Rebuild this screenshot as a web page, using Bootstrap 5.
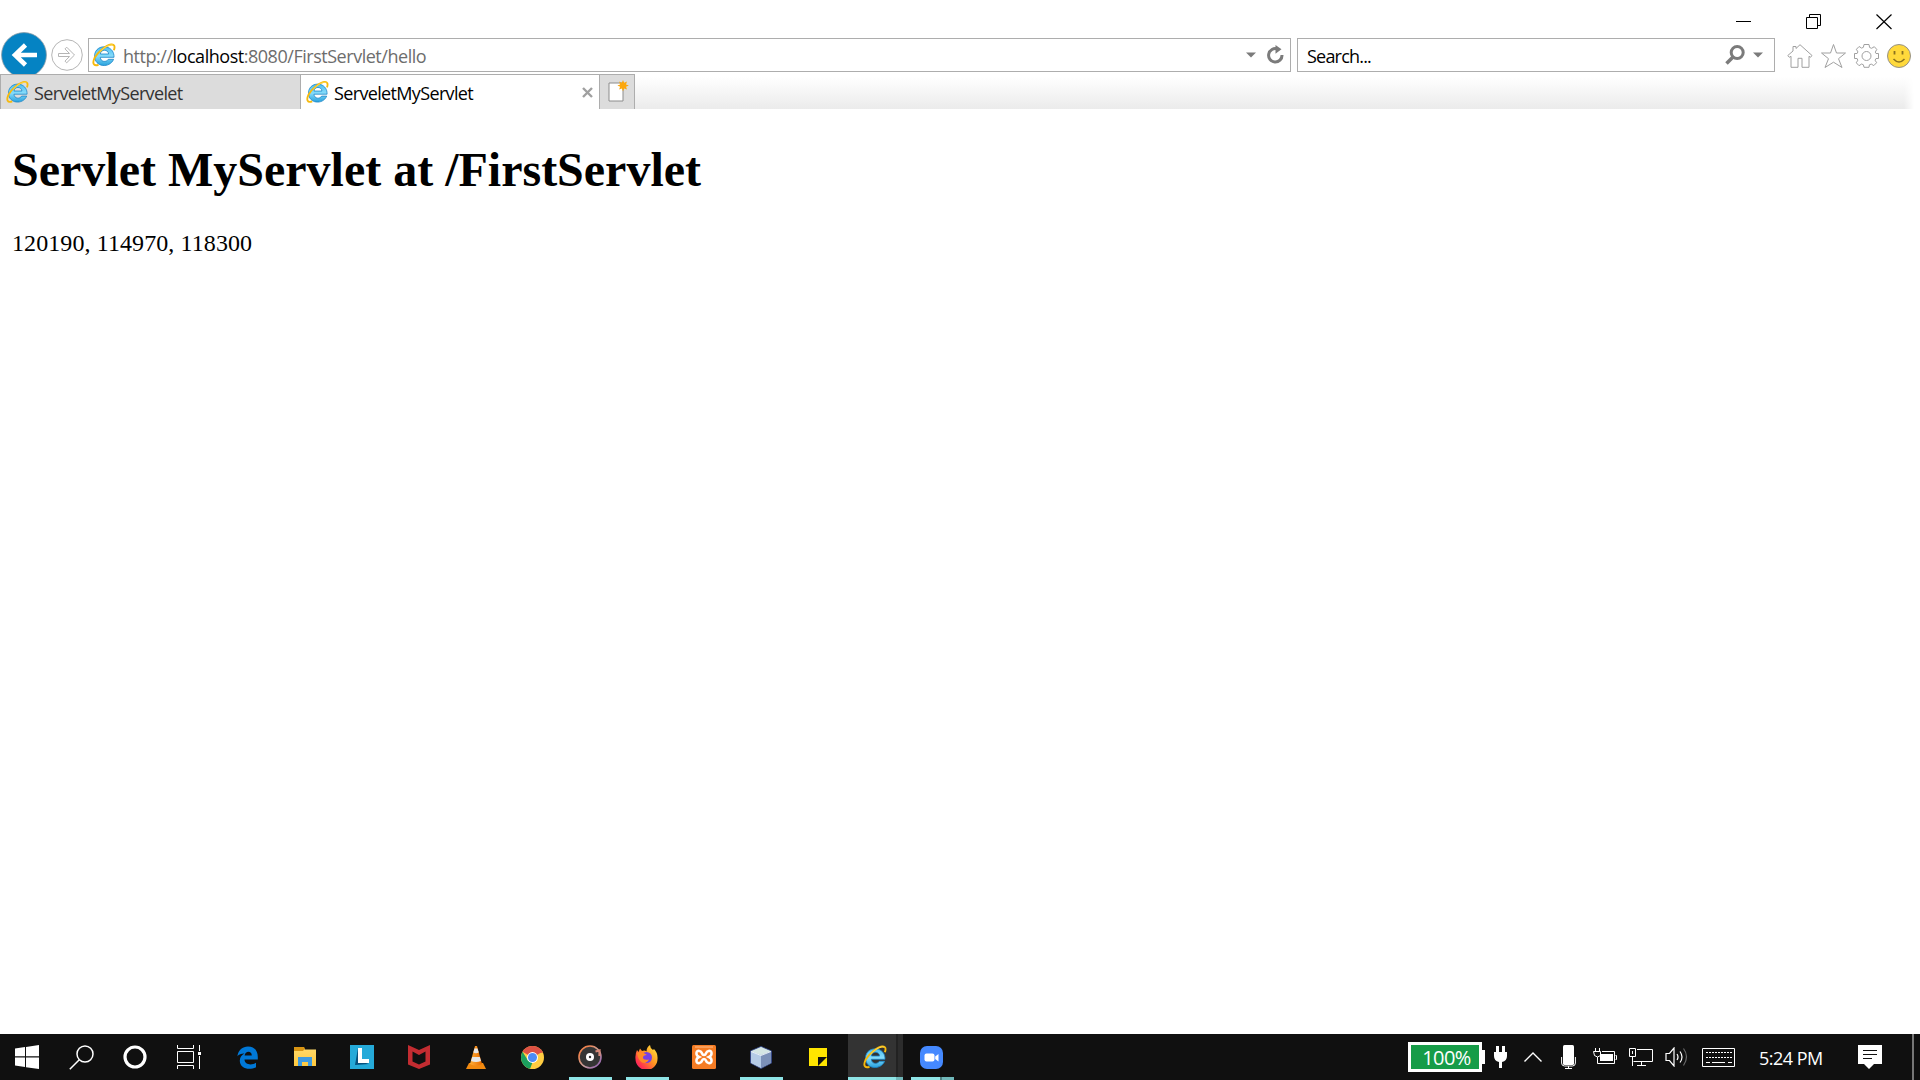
<!DOCTYPE html>
<html lang="en">
<head>
<meta charset="utf-8">
<title>ServeletMyServlet</title>
<link href="https://cdn.jsdelivr.net/npm/bootstrap@5.3.0/dist/css/bootstrap.min.css" rel="stylesheet">
<style>
  html, body { height: 100%; }
  body { overflow: hidden; background: #fff; color: #000; font-family: "Open Sans", "Noto Sans", sans-serif; }
  svg { display: block; flex: none; }
  .ui-text { font-size: 18px; line-height: 24px; white-space: nowrap; }
  header .ui-text { padding-top: 2px; }
  .title-bar { height: 38px; padding: 14px 28px 0 0; gap: 54px; }
  .nav-bar { height: 34px; padding-left: 1px; }
  .field-box { height: 34px; border: 1px solid #adadad; background: #fff; }
  .address-box { width: 1203px; margin-left: 5px; padding: 0 4px 0 3px; }
  .search-box { width: 478px; margin-left: 6px; padding: 0 11px 0 9px; }
  .search-box .ui-text { letter-spacing: -.8px; }
  .url { color: #6d6d6d; letter-spacing: -.47px; margin-left: 7px; }
  .url span { color: #000; }
  .tool-icons { margin-left: 12px; gap: 8px; padding-top: 1px; }
  .tab-strip { height: 37px; padding-top: 2px; }
  .tab-fill { background: linear-gradient(#fff 8%, #ebebeb); -webkit-mask-image: linear-gradient(90deg, #000 calc(100% - 16px), transparent calc(100% - 6px)); }
  .tab-item { width: 300px; border: 1px solid #adadad; border-bottom: 0; padding: 0 6px 0 5px; background: #fff; z-index: 1; }
  .tab-item.idle { background: #dcdcdc; color: #333; border-right: 0; }
  .tab-item .ui-text { margin-left: 5px; letter-spacing: -.65px; }
  .tab-new { width: 35px; border: 1px solid #adadad; border-left: 0; border-bottom: 0; background: #dcdcdc; z-index: 1; padding-left: 8px; }
  .page { font-family: "Liberation Serif", serif; padding: 33px 12px; }
  .page h1 { font-size: 48px; font-weight: 700; line-height: 55px; margin: 0 0 32px; }
  .page p { font-size: 24px; line-height: 28px; margin: 0; letter-spacing: .09px; }
  .taskbar { height: 46px; background: #101010; color: #fff; }
  .sys-btn { width: 54px; }
  .app-btn { width: 57px; position: relative; padding-right: 2px; }
  .app-list { margin-left: 4px; }
  .running::after { content: ""; position: absolute; left: 7px; width: 43px; bottom: 0; height: 3px; background: #8ee4e6; }
  .active-app { background: linear-gradient(90deg, transparent 1px, #333 1px 49px, #222 49px 51px, #2c2c2c 51px 56px, transparent 56px); }
  .active-app::after { left: 1px; width: 55px; background: linear-gradient(90deg, #8ee4e6 48px, #70b8ba 48px); }
  .grouped::after { left: 7px; background: linear-gradient(90deg, #8ee4e6 29px, #4f8283 29px 31px, #70b8ba 31px); }
  .battery { width: 74px; height: 30px; border: 3px solid #fff; background: #169c48; position: relative; }
  .battery::after { content: ""; position: absolute; left: 71px; top: 5px; width: 3px; height: 14px; background: #fff; }
  .battery .ui-text { font-size: 20px; letter-spacing: -.6px; padding: 2px 0 0 3px; }
  .clock { letter-spacing: -.5px; width: 66px; padding-top: 1px; }
  .peek { width: 2px; background: #777; margin-left: 30px; margin-right: 6px; }
</style>
<script src="https://cdn.jsdelivr.net/npm/bootstrap@5.3.0/dist/js/bootstrap.bundle.min.js"></script>
</head>
<body class="d-flex flex-column">
<svg width="0" height="0" class="position-absolute">
  <defs>
    <linearGradient id="ieBlue" x1="0" y1="0" x2="0" y2="1"><stop offset="0" stop-color="#4dbdf0"/><stop offset=".5" stop-color="#86dcfa"/><stop offset="1" stop-color="#27a1dd"/></linearGradient>
    <linearGradient id="grooveRing" x1="0" y1="0" x2="1" y2="1"><stop offset=".2" stop-color="#ef8450"/><stop offset=".55" stop-color="#c9a09c"/><stop offset="1" stop-color="#8755b5"/></linearGradient>
    <linearGradient id="foxFire" x1="1" y1="0" x2="0" y2="1"><stop offset="0" stop-color="#fff044"/><stop offset=".45" stop-color="#ff9421"/><stop offset=".8" stop-color="#ff2f50"/><stop offset="1" stop-color="#e91e84"/></linearGradient>
    <linearGradient id="cone" x1="0" y1="0" x2="1" y2="0"><stop offset="0" stop-color="#ffad37"/><stop offset="1" stop-color="#e86c00"/></linearGradient>
    <linearGradient id="folder" x1="0" y1="0" x2="0" y2="1"><stop offset="0" stop-color="#ffda6b"/><stop offset="1" stop-color="#ffc83d"/></linearGradient>
    <symbol id="ie" viewBox="0 0 24 24">
      <path d="M22 14.300H8.300c.2 4.800 6.200 5.300 8 2H21.600C17.800 25.600 2.600 24.500 2.600 13 2.600.5 22.500.5 22 14.300zM8.400 11h8.200c-.3-5-7.900-5-8.200 0z" fill="url(#ieBlue)" fill-rule="evenodd" stroke="#1a84c6" stroke-width=".8"/>
      <path d="M21.900 7.200C23.300 3.200 22.300 1 19 1.500 14 2.200 6 8.800 2.600 14.800.2 20 1.200 23.700 6.500 21.800" fill="none" stroke="#f6b90c" stroke-width="1.900"/>
      <path d="M21.200 2.200C18.500.7 12 4.300 7.600 9" fill="none" stroke="#ffdc55" stroke-width=".9"/>
    </symbol>
  </defs>
</svg>

<header>
  <div class="title-bar d-flex justify-content-end">
    <svg width="17" height="16"><path d="M1 7.500h15" stroke="#000"/></svg>
    <svg width="16" height="16" fill="none" stroke="#000"><path d="M.5 3.500h11v11H.5zM3.500 3V.5h11v11H12"/></svg>
    <svg width="16" height="16" stroke="#000" stroke-width="1.200"><path d="M.5.500l15 14.500M15.500.500L.5 15"/></svg>
  </div>
  <div class="nav-bar d-flex align-items-center">
    <svg width="46" height="46"><circle cx="23" cy="23" r="22.400" fill="#0583c3" stroke="#8a9ba5" stroke-width=".8"/><path d="M36 23H15M24.500 13L14 23l10.500 10" fill="none" stroke="#fff" stroke-width="4.600"/></svg>
    <svg width="32" height="32" class="ms-1" fill="none" stroke="#b5b5b5"><circle cx="16" cy="16" r="15.300" fill="#fff"/><path d="M7.500 14.500h11l-4.500-4.600 1.700-1.700 7.800 7.800-7.800 7.800-1.700-1.700 4.500-4.600h-11z"/></svg>
    <div class="field-box address-box d-flex align-items-center">
      <svg width="24" height="24"><use href="#ie"/></svg>
      <div class="ui-text url">http://<span>localhost</span>:8080/FirstServlet/hello</div>
      <svg class="ms-auto" width="10" height="6"><path d="M0 .5h10L5 5.500z" fill="#7b7b7b"/></svg>
      <svg class="ms-2" width="22" height="22"><path d="M13.500 5A6.700 6.700 0 1 0 18 11" fill="none" stroke="#7b7b7b" stroke-width="3"/><path d="M11.500 1l6 4.200-6 4.500z" fill="#7b7b7b"/></svg>
    </div>
    <div class="field-box search-box d-flex align-items-center">
      <div class="ui-text">Search...</div>
      <svg class="ms-auto" width="20" height="20"><circle cx="12.200" cy="7.500" r="6" fill="none" stroke="#7b7b7b" stroke-width="3"/><path d="M8 12l-6.500 6.500" stroke="#7b7b7b" stroke-width="3.500"/></svg>
      <svg class="ms-2" width="10" height="6"><path d="M0 .5h10L5 5.500z" fill="#7b7b7b"/></svg>
    </div>
    <div class="tool-icons d-flex align-items-center">
      <svg width="26" height="26" fill="none" stroke="#a0a0a0"><path d="M.8 12.500L6 8V3.500h3v2l4-3.800 12 10.800-1.500 1.800-1.500-1v11h-7v-9h-4v9H4v-11l-1.700 1z"/></svg>
      <svg width="25" height="26" fill="none" stroke="#a0a0a0"><path d="M12.500 1.500l3 8.500h9l-7 5.700 3.500 8.800-8.500-5.300-8.500 5.300 3.500-8.800L.5 10h9z"/></svg>
      <svg width="25" height="26" viewBox="0 0 25 26" fill="none" stroke="#a0a0a0"><circle cx="12.500" cy="13" r="4.500"/><path d="M10 1.500h5l.6 3 2 .8 2.700-1.600 2.500 2.700-1.500 2.700.7 1.400h2.500v5h-2.500l-.9 1.700 1.500 2.500-2.800 2.900-2.500-1.500-1.900.7-.4 2.500h-5l-.6-2.500-1.800-.8-2.600 1.700-2.700-2.900 1.500-2.600-.7-1.700H.5v-5h2.600l.8-1.600-1.500-2.600 2.700-2.800 2.500 1.600 1.800-.8z"/></svg>
      <svg width="24" height="24"><circle cx="12" cy="12" r="11.500" fill="#ffd93b" stroke="#959188"/><path d="M7.500 7v3.500M15.500 7v3.500" stroke="#8a7220" stroke-width="1.800"/><path d="M6.500 15q5.500 6 11 0" fill="none" stroke="#8a7220" stroke-width="1.500"/></svg>
    </div>
  </div>
  <div class="tab-strip d-flex">
    <div class="tab-item idle d-flex align-items-center">
      <svg width="23" height="24"><use href="#ie"/></svg><span class="ui-text">ServeletMyServelet</span>
    </div>
    <div class="tab-item d-flex align-items-center">
      <svg width="23" height="24"><use href="#ie"/></svg><span class="ui-text">ServeletMyServlet</span>
      <svg class="ms-auto" width="11" height="11"><path d="M1 1l9 9M10 1l-9 9" stroke="#a0a0a0" stroke-width="2.400"/></svg>
    </div>
    <div class="tab-new d-flex align-items-center">
      <svg width="22" height="24"><path d="M1 3h14v18H1z" fill="#fff" stroke="#8c8c8c"/><path d="M15 0l1.200 2.700L19 1.600l-1 2.800 2.900 1.100-2.900 1.200 1 2.700-2.800-1L15 11.200l-1.200-2.800-2.700 1 1-2.700-2.700-1.200 2.700-1.100-1-2.800 2.700 1.100z" fill="#fca70c"/></svg>
    </div>
    <div class="tab-fill flex-grow-1"></div>
  </div>
</header>

<main class="page flex-grow-1">
  <h1>Servlet MyServlet at /FirstServlet</h1>
  <p>120190, 114970, 118300</p>
</main>

<footer class="taskbar d-flex align-items-stretch">
  <div class="sys-btn d-flex align-items-center justify-content-center"><svg width="24" height="24" fill="#fff"><path d="M0 3.500L10 2v9.300H0zM11 1.900L24 0v11.300H11zM0 12.500h10V22L0 20.500zM11 12.500h13V24l-13-1.800z"/></svg></div>
  <div class="sys-btn d-flex align-items-center justify-content-center"><svg width="25" height="25" fill="none" stroke="#fff" stroke-width="1.500"><circle cx="16" cy="9" r="8"/><path d="M10.300 14.700L.8 24.200"/></svg></div>
  <div class="sys-btn d-flex align-items-center justify-content-center"><svg width="24" height="24"><circle cx="12" cy="12" r="10" fill="none" stroke="#fff" stroke-width="3.200"/></svg></div>
  <div class="sys-btn d-flex align-items-center justify-content-center"><svg width="24" height="24" fill="none" stroke="#fff"><path d="M.5 0v3.500h16V0M.5 6.500h16v11H.5zM.5 24v-3.500h16V24M22.500 0v6M22.500 11v13"/><path d="M21 7h3v3h-3z" fill="#fff" stroke="none"/></svg></div>
  <div class="app-list d-flex align-items-stretch">
    <div class="app-btn d-flex align-items-center justify-content-center"><svg width="21" height="23" viewBox="0 0 21 23"><path d="M.4 10.200C1.300 4 5.500.5 11 .5c6.500 0 9.800 4.500 9.800 10.500v2.500H7.500c.2 5.500 7.300 6 11.500 3.300v4.400C11.500 25 3 22 2.800 15c-.1-3.700 2-6.300 4.600-7.500C4.400 7.400 2 8.200.4 10.200zM7.600 9.600h7.200c0-5.300-6.800-4.700-7.200 0z" fill="#0078d7" fill-rule="evenodd"/></svg></div>
    <div class="app-btn d-flex align-items-center justify-content-center"><svg width="22" height="20"><path d="M0 1h9l2 1.500h11V19H0z" fill="url(#folder)"/><path d="M0 0h10l1 1.500L9 4H0z" fill="#d99513"/><path d="M4 19v-9h14v9h-4v-4H8v4z" fill="#3e9be0"/></svg></div>
    <div class="app-btn d-flex align-items-center justify-content-center"><svg width="24" height="24"><path d="M0 0h24v24H0z" fill="#25aad9"/><path d="M8 3L5 20l14-1-9-3z" fill="#07527e"/><path d="M8 3h4v11h7v4H8z" fill="#fff"/></svg></div>
    <div class="app-btn d-flex align-items-center justify-content-center"><svg width="22" height="24"><path d="M0 0l11 5L22 0v19.500L11 24 0 19.500zM4.500 6.500v10L11 19.500l6.500-3v-10L11 10z" fill="#c32c31" fill-rule="evenodd"/></svg></div>
    <div class="app-btn d-flex align-items-center justify-content-center"><svg width="20" height="23"><path d="M3 17h14l3 6H0z" fill="#f28a10"/><path d="M9 0h2l5 18q-6 3.500-12 0z" fill="url(#cone)"/><path d="M8.500 2.500h3l1.300 4q-2.800 1.500-5.500 0zM6.200 11h7.600l1.200 4q-5 2-10 0z" fill="#e6e8ea"/></svg></div>
    <div class="app-btn d-flex align-items-center justify-content-center"><svg width="23" height="23" viewBox="0 0 24 24"><circle cx="12" cy="12" r="12" fill="#ffcd42"/><path d="M12 12L1.600 6A12 12 0 0 1 22.400 6z" fill="#dd5144"/><path d="M1.600 6L7.300 15 12 17l-2.500 6.700A12 12 0 0 1 1.600 6z" fill="#1ba05e"/><path d="M12 6.300h10.600" stroke="#dd5144" stroke-width="1.500"/><circle cx="12" cy="12" r="5.700" fill="#fff"/><circle cx="12" cy="12" r="4.700" fill="#4c8bf5"/></svg></div>
    <div class="app-btn running d-flex align-items-center justify-content-center"><svg width="24" height="24"><circle cx="12" cy="12" r="11" fill="#353535" stroke="url(#grooveRing)" stroke-width="1.600"/><circle cx="12" cy="12" r="4" fill="#fff"/><circle cx="12" cy="12" r="1.200" fill="#333"/><path d="M17.500 6.500l4-1V11" fill="none" stroke="#d58776" stroke-width="2.200"/></svg></div>
    <div class="app-btn running d-flex align-items-center justify-content-center"><svg width="23" height="24"><path d="M2 5l1.500 2L5 3.500 7 6q3-1 4.500.5Q11.500 2 15 0q0 3 3 5l1-1q4 4 3.500 10A11 11 0 0 1 .5 14Q0 9 2 5z" fill="url(#foxFire)"/><circle cx="11.500" cy="12.500" r="5.500" fill="#7540e5"/><path d="M2 8q5-2 10 2-4 0-4 2.500 0 3 6 2-2.500 4.500-7 3Q3 15 2 8z" fill="#ff8a26"/></svg></div>
    <div class="app-btn d-flex align-items-center justify-content-center"><svg width="24" height="24"><rect width="24" height="24" rx="1.500" fill="#f57c24"/><path d="M3 2h18" stroke="#ffbf8d"/><path d="M7.500 6C3.500 5 3.500 10.500 7 12c-3.500 1.500-3.500 7 .5 6 3.500-.5 1.500-4 4.500-4s1 3.500 4.500 4c4 1 4-4.500.5-6 3.500-1.500 3.500-7-.5-6C13 6.500 15 10 12 10S11 6.500 7.500 6z" fill="none" stroke="#fff" stroke-width="2.500"/></svg></div>
    <div class="app-btn running d-flex align-items-center justify-content-center"><svg width="22" height="23"><path d="M11 .5L21.500 5v12L11 22.500.5 17V5z" fill="#8fa8ca" stroke="#364782"/><path d="M11 1L21 5.300 11 9 1 5.300z" fill="#d5e6e4"/><path d="M1 5.500L11 9.500V22L1 17z" fill="#b5cbe6"/><path d="M11 9.500l10-4V17l-10 5z" fill="#7c91b8"/><path d="M1 5.500l10 4 10-4" fill="none" stroke="#f7faff" stroke-width=".8"/></svg></div>
    <div class="app-btn d-flex align-items-center justify-content-center"><svg width="18" height="18"><path d="M0 0h18v9H9v9H0z" fill="#ffe500"/><path d="M18 9v9H9z" fill="#ffe500"/></svg></div>
    <div class="app-btn running active-app d-flex align-items-center justify-content-center"><svg width="24" height="24"><use href="#ie"/></svg></div>
    <div class="app-btn running grouped d-flex align-items-center justify-content-center"><svg width="23" height="23"><rect width="23" height="23" rx="7" fill="#4589ff"/><rect x="4.500" y="7.500" width="10" height="8" rx="2" fill="#fff"/><path d="M15.200 10.500l3.300-2.500v7.500l-3.300-2.500z" fill="#fff"/></svg></div>
  </div>
  <div class="d-flex align-items-center ms-auto">
    <div class="battery d-flex align-items-center justify-content-center"><span class="ui-text">100%</span></div>
    <svg style="margin-left:12px" width="13" height="22" fill="#fff"><path d="M2 0h3v6h3V0h3v6h2v4q0 5-5 6v6H5v-6q-5-1-5-6V6h2z"/></svg>
    <svg style="margin-left:17px" width="18" height="10"><path d="M.5 9.500L9 1l8.500 8.500" fill="none" stroke="#fff" stroke-width="1.400"/></svg>
    <svg style="margin-left:19px" width="15" height="24"><rect x="2" width="11" height="20" rx="1.500" fill="#fff"/><path d="M.6 12v6q0 3 3 3h7.800q3 0 3-3v-6M7.500 21v2.500M4 23.500h7" fill="none" stroke="#fff"/></svg>
    <svg style="margin-left:17px" width="24" height="18" fill="none" stroke="#fff"><path d="M2.500 0v3M6.500 0v3M.5 3.500h7v4q-3 3-6 0zM4.500 9v6.500h17v-12H9M22.500 7.500h1v4h-1"/><path d="M7 6h13v7H7z" fill="#fff" stroke="none"/></svg>
    <svg style="margin-left:12px" width="25" height="19" fill="none" stroke="#fff"><path d="M8 1.500h15.500v12H4.500M.5.500h6v8h-6zM3.500 3v3M3.500 9v9M8 17.500h9M12.500 14v3.500"/></svg>
    <svg style="margin-left:11px" width="24" height="20" fill="none" stroke="#fff" stroke-width="1.200"><path d="M1 6.500h3.500L9 1v18l-4.500-5.500H1zM12 7q2 3 0 6M15 4.500q4 5.500 0 11"/><path d="M18.500 1.500q6 8 0 17" stroke="#696969"/></svg>
    <svg style="margin-left:13px" width="33" height="19" fill="none" stroke="#fff"><path d="M.5.500h32v18H.5z"/><path d="M4 4.500h26M4 9.500h26" stroke-dasharray="2 1"/><path d="M4 14.500h4M10 14.500h13M26 14.500h4"/></svg>
    <span class="ui-text clock" style="margin-left:24px">5:24 PM</span>
    <svg style="margin-left:33px" width="24" height="24"><path d="M0 0h24v19h-8l-5 5-5-5H0z" fill="#fff"/><path d="M5 5.500h14M5 9.500h14M5 13.500h9" stroke="#101010"/></svg>
    <div class="peek align-self-stretch"></div>
  </div>
</footer>
</body>
</html>
